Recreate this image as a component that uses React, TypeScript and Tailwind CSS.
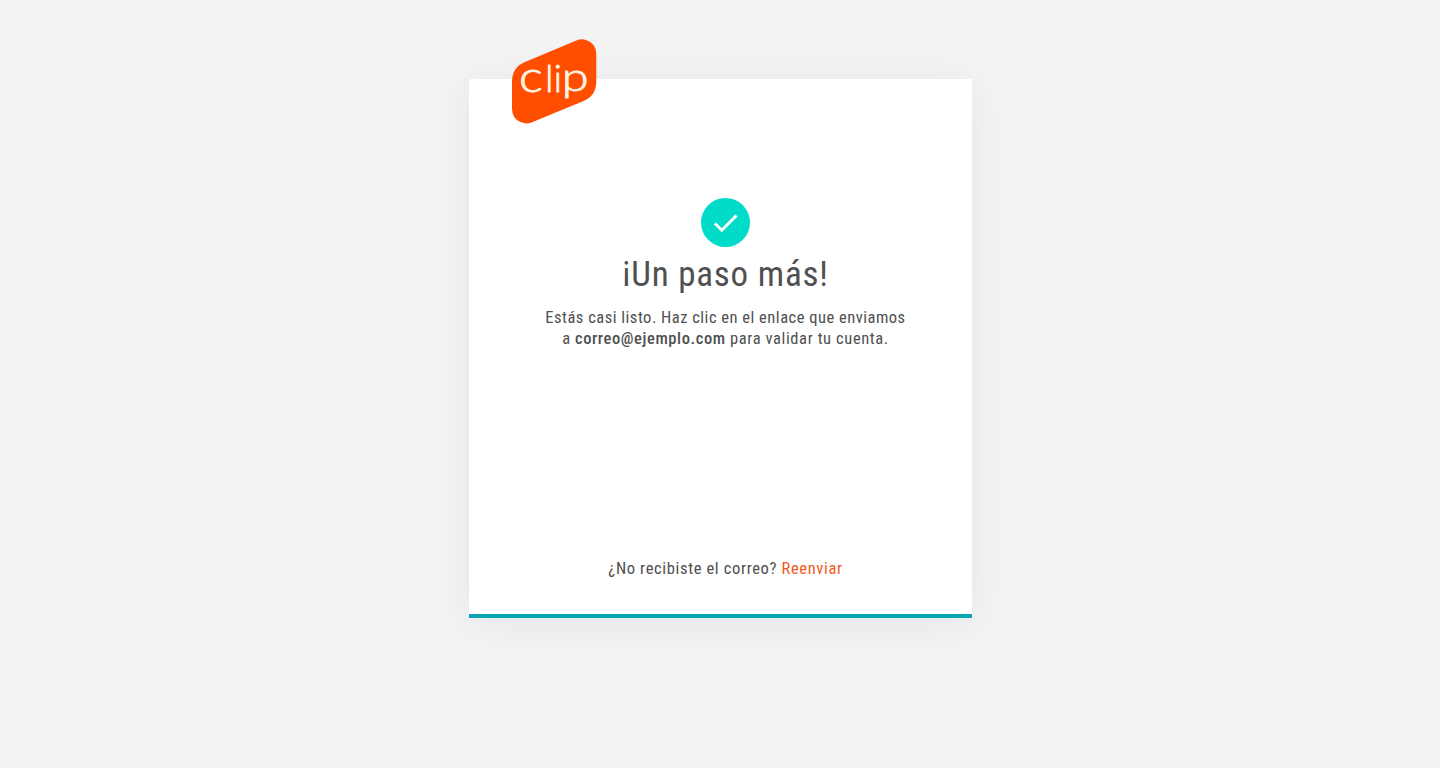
import React from "react";

function Logo() {
  return (
    <svg
      role="img"
      aria-label="clip"
      className="absolute left-[43px] -top-10 h-[85px] w-[85px] font-['Lato',sans-serif]"
      viewBox="0 0 85 85"
    >
      <path
        d="M12.5 23.2 L65.5 1 Q69.5 -.5 74 .9 Q84.3 4.2 84.3 15 V42 C84.3 52.500 80 58.500 71 62.200 L19.500 83.500 Q14 85.600 8 82.800 Q0 79 0 69.500 V43 C0 33 4.500 26.500 12.500 23.200 Z"
        fill="#ff4e00"
      />
      <g fill="#fff3e6" stroke="#fff3e6" strokeWidth="0.8" strokeLinejoin="round" fontWeight="300">
        <text transform="translate(7 53) scale(1.170 1)" fontSize="43">c</text>
        <text x="33.200" y="53" fontSize="36.500">l</text>
        <text x="41.800" y="53" fontSize="36.500">i</text>
        <text transform="translate(49.700 52) scale(1.220 1)" fontSize="40">p</text>
      </g>
    </svg>
  );
}

function CheckBadge() {
  return (
    <div className="flex size-[49px] items-center justify-center rounded-full bg-[#00dcc8]">
      <svg className="size-[49px]" viewBox="0 0 49 49" fill="none" aria-hidden="true">
        <path d="M13.800 25.300 L20.800 32.200 L35.500 17.500" stroke="#fff" strokeWidth="3" />
      </svg>
    </div>
  );
}

export default function App() {
  return (
    <div className="min-h-screen bg-[#f3f3f3] pt-[79px] pl-[469px] font-['Roboto',sans-serif] text-[#505050] [font-stretch:75%]">
      <main className="relative flex h-[539px] w-[503px] flex-col items-center border-b-4 border-[#0aa5b3] bg-white pt-[119px] pb-[33px] pl-[10px] shadow-[0_5px_40px_rgba(0,0,0,0.06)]">
        <Logo />
        <CheckBadge />
        <h1 className="mt-[4px] h-[42px] text-[35px] leading-[42px] font-normal tracking-[0.8px] whitespace-nowrap">
          <span className="align-[6px] leading-none">¡</span>Un paso más!
        </h1>
        <p className="mt-[14px] text-center text-[16.5px] leading-[21px] tracking-[0.5px] whitespace-nowrap">
          Estás casi listo. Haz clic en el enlace que enviamos
          <br />
          a <strong className="font-medium tracking-[0.6px]">correo@ejemplo.com</strong>
          <span className="tracking-[0.6px]"> para validar tu cuenta.</span>
        </p>
        <p className="mt-auto text-[16.5px] leading-[24px] tracking-[0.65px] whitespace-nowrap">
          ¿No recibiste el correo?{" "}
          <a href="#reenviar" className="text-[#f05a23]">Reenviar</a>
        </p>
      </main>
    </div>
  );
}
